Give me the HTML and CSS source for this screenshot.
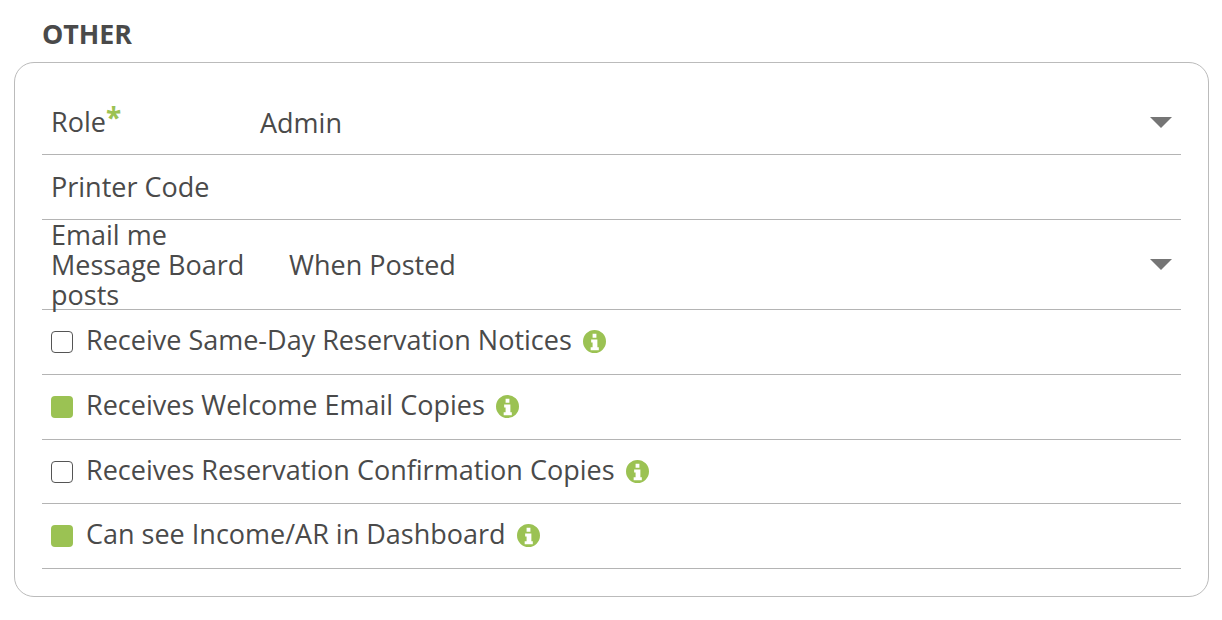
FILE: index.html
```html
<!DOCTYPE html>
<html>
<head>
  <meta charset="UTF-8">
  <title>Other</title>
  <link rel="stylesheet" href="styles.css">
</head>
<body>
  <h2 class="section-title">OTHER</h2>
  <div class="panel">

    <div class="row row-role">
      <div class="label label-role">Role<span class="required">*</span></div>
      <div class="value">Admin</div>
      <span class="arrow"></span>
    </div>

    <div class="row row-printer">
      <div class="label">Printer Code</div>
    </div>

    <div class="row row-email">
      <div class="label label-email">Email me Message Board posts</div>
      <div class="value">When Posted</div>
      <span class="arrow"></span>
    </div>

    <div class="row row-check">
      <span class="check"></span>
      <span class="check-text">Receive Same-Day Reservation Notices</span>
      <svg class="info" viewBox="0 0 24 24"><use href="#info-icon"></use></svg>
    </div>

    <div class="row row-check">
      <span class="check checked"></span>
      <span class="check-text">Receives Welcome Email Copies</span>
      <svg class="info" viewBox="0 0 24 24"><use href="#info-icon"></use></svg>
    </div>

    <div class="row row-check row-short">
      <span class="check"></span>
      <span class="check-text">Receives Reservation Confirmation Copies</span>
      <svg class="info" viewBox="0 0 24 24"><use href="#info-icon"></use></svg>
    </div>

    <div class="row row-check">
      <span class="check checked"></span>
      <span class="check-text">Can see Income/AR in Dashboard</span>
      <svg class="info" viewBox="0 0 24 24"><use href="#info-icon"></use></svg>
    </div>

  </div>

  <svg class="icon-defs" width="0" height="0">
    <symbol id="info-icon" viewBox="0 0 24 24">
      <path fill="#9bc253" fill-rule="evenodd" d="M12 0a12 12 0 1 0 0 24a12 12 0 0 0 0-24zM10 4h4v4h-4zM8.500 10h6.500v8h1.500v3h-8.500v-3h2v-5h-1.500z"/>
    </symbol>
  </svg>
</body>
</html>
```

FILE: styles.css
```css
body{
  margin: 0;
  background-color: #ffffff;
  color: #4a4a4a;
  font-family: "Open Sans", sans-serif;
  font-size: 27px;
}

.section-title{
  margin: 0;
  padding: 16px 0 0 42px;
  height: 46px;
  box-sizing: border-box;
  font-size: 26.800px;
  line-height: 36px;
  font-weight: 700;
}

.panel{
  margin-left: 14px;
  width: 1195px;
  height: 535px;
  margin-top: 16px;
  box-sizing: border-box;
  padding: 27px 27px 0 27px;
  border: 1px solid #bbbbbb;
  border-radius: 20px;
}

.row{
  display: flex;
  align-items: center;
  border-bottom: 1px solid #b4b4b4;
  padding-left: 9px;
  box-sizing: border-box;
}

.row-role{
  height: 65px;
}

.row-printer{
  height: 65px;
}

.row-email{
  height: 90px;
}

.row-check{
  height: 65px;
}

.row-short{
  height: 64px;
}

.label{
  line-height: 30px;
}

.label-role{
  width: 209px;
}

.label-email{
  width: 200px;
  margin-right: 38px;
}

.required{
  color: #9bc253;
  font-size: 28px;
  font-weight: 700;
  line-height: 0;
  vertical-align: 4px;
}

.value{
  flex: 1;
}

.arrow{
  width: 0;
  height: 0;
  margin-right: 9px;
  border-left: 11px solid transparent;
  border-right: 11px solid transparent;
  border-top: 11px solid #757575;
}

.check{
  width: 22px;
  height: 22px;
  box-sizing: border-box;
  margin-right: 13px;
  border: 1px solid #555555;
  border-radius: 4px;
}

.check.checked{
  background-color: #9bc253;
  border: none;
}

.check-text{
  margin-bottom: 5px;
}

.info{
  width: 23px;
  height: 23px;
  margin-left: 11px;
  margin-bottom: 1px;
}

.icon-defs{
  display: block;
}
```
